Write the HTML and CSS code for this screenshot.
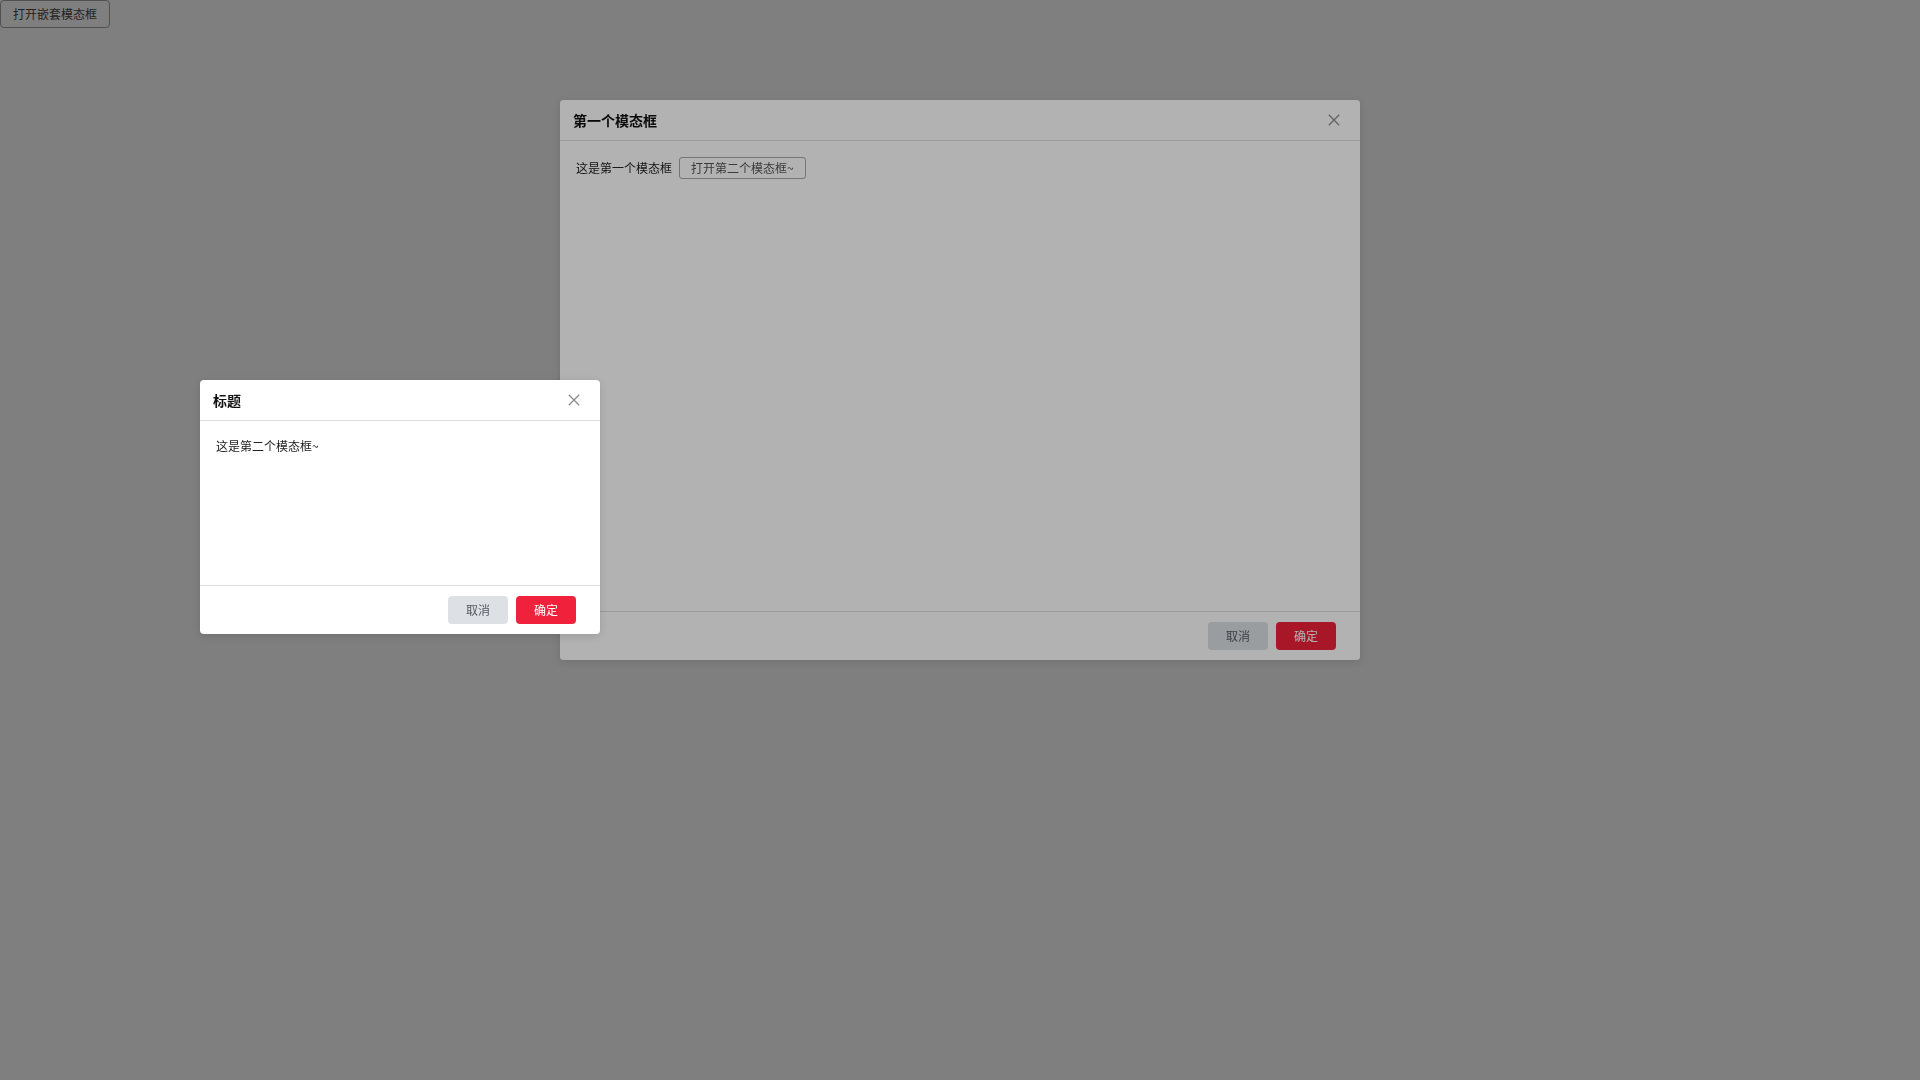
FILE: index.html
```html
<!DOCTYPE html>
<html lang="zh-CN">
<head>
<meta charset="utf-8">
<title>嵌套模态框</title>
<link rel="stylesheet" href="styles.css">
</head>
<body>
<button class="open-btn">打开嵌套模态框</button>
<div class="mask"></div>

<div class="modal modal-first is-behind">
  <div class="modal-header">
    <span class="modal-title">第一个模态框</span>
    <svg class="close" width="12" height="12" viewBox="0 0 12 12"><path d="M0.8 0.8 L11.2 11.2 M11.2 0.8 L0.8 11.2" stroke="#8c8c8c" stroke-width="1.3" fill="none"/></svg>
  </div>
  <div class="modal-body">
    <div class="row">
      <span>这是第一个模态框</span>
      <button class="inner-btn">打开第二个模态框~</button>
    </div>
  </div>
  <div class="modal-footer">
    <button class="btn btn-cancel">取消</button>
    <button class="btn btn-ok">确定</button>
  </div>
</div>

<div class="modal modal-second">
  <div class="modal-header">
    <span class="modal-title">标题</span>
    <svg class="close" width="12" height="12" viewBox="0 0 12 12"><path d="M0.8 0.8 L11.2 11.2 M11.2 0.8 L0.8 11.2" stroke="#8c8c8c" stroke-width="1.3" fill="none"/></svg>
  </div>
  <div class="modal-body">
    <div class="row row-text">
      <span>这是第二个模态框~</span>
    </div>
  </div>
  <div class="modal-footer">
    <button class="btn btn-cancel">取消</button>
    <button class="btn btn-ok">确定</button>
  </div>
</div>
</body>
</html>
```

FILE: styles.css
```css
html, body {
  margin: 0;
  padding: 0;
  width: 1920px;
  height: 1080px;
  background: #ffffff;
  font-family: "Noto Sans CJK SC", "Noto Sans", sans-serif;
  overflow: hidden;
}

button {
  font-family: "Noto Sans CJK SC", "Noto Sans", sans-serif;
}

.open-btn {
  display: block;
  margin: 0;
  height: 28px;
  width: 110px;
  padding: 0;
  border: 1px solid #a0a0a0;
  border-radius: 4px;
  background: #ffffff;
  color: #444444;
  font-size: 12px;
  line-height: 16px;
}

.mask {
  position: fixed;
  inset: 0;
  background: rgba(0, 0, 0, 0.5);
}

.modal {
  position: absolute;
  display: flex;
  flex-direction: column;
  background: #ffffff;
  border-radius: 4px;
  box-shadow: 0 2px 8px rgba(0, 0, 0, 0.12);
  color: #222222;
}

.modal-first {
  left: 560px;
  top: 100px;
  width: 800px;
  height: 560px;
}

.modal-second {
  left: 200px;
  top: 380px;
  width: 400px;
  height: 254px;
}

.is-behind::after {
  content: "";
  position: absolute;
  inset: 0;
  border-radius: 4px;
  background: rgba(0, 0, 0, 0.3);
}

.modal-header {
  height: 40px;
  flex: none;
  display: flex;
  align-items: center;
  justify-content: space-between;
  padding: 0 20px 0 13px;
  border-bottom: 1px solid #dcdcdc;
}

.modal-title {
  font-size: 14px;
  line-height: 20px;
  font-weight: bold;
  color: #111111;
}

.close {
  display: block;
}

.modal-body {
  flex: 1;
  padding: 16px;
  font-size: 12px;
  line-height: 16px;
  color: #222222;
}

.row {
  display: flex;
  align-items: center;
  gap: 7px;
}

.row-text {
  min-height: 17px;
}

.inner-btn {
  height: 22px;
  padding: 0 11px;
  border: 1px solid #a8a8a8;
  border-radius: 3px;
  background: #ffffff;
  color: #555555;
  font-size: 12px;
  line-height: 16px;
}

.modal-footer {
  flex: none;
  height: 48px;
  display: flex;
  align-items: center;
  justify-content: flex-end;
  gap: 8px;
  padding: 0 24px;
  border-top: 1px solid #dcdcdc;
}

.btn {
  width: 60px;
  height: 28px;
  border: none;
  border-radius: 4px;
  font-size: 12px;
  line-height: 16px;
  padding: 0;
}

.btn-cancel {
  background: #dde1e6;
  color: #555a60;
}

.btn-ok {
  background: #f0213a;
  color: #ffffff;
}
```
